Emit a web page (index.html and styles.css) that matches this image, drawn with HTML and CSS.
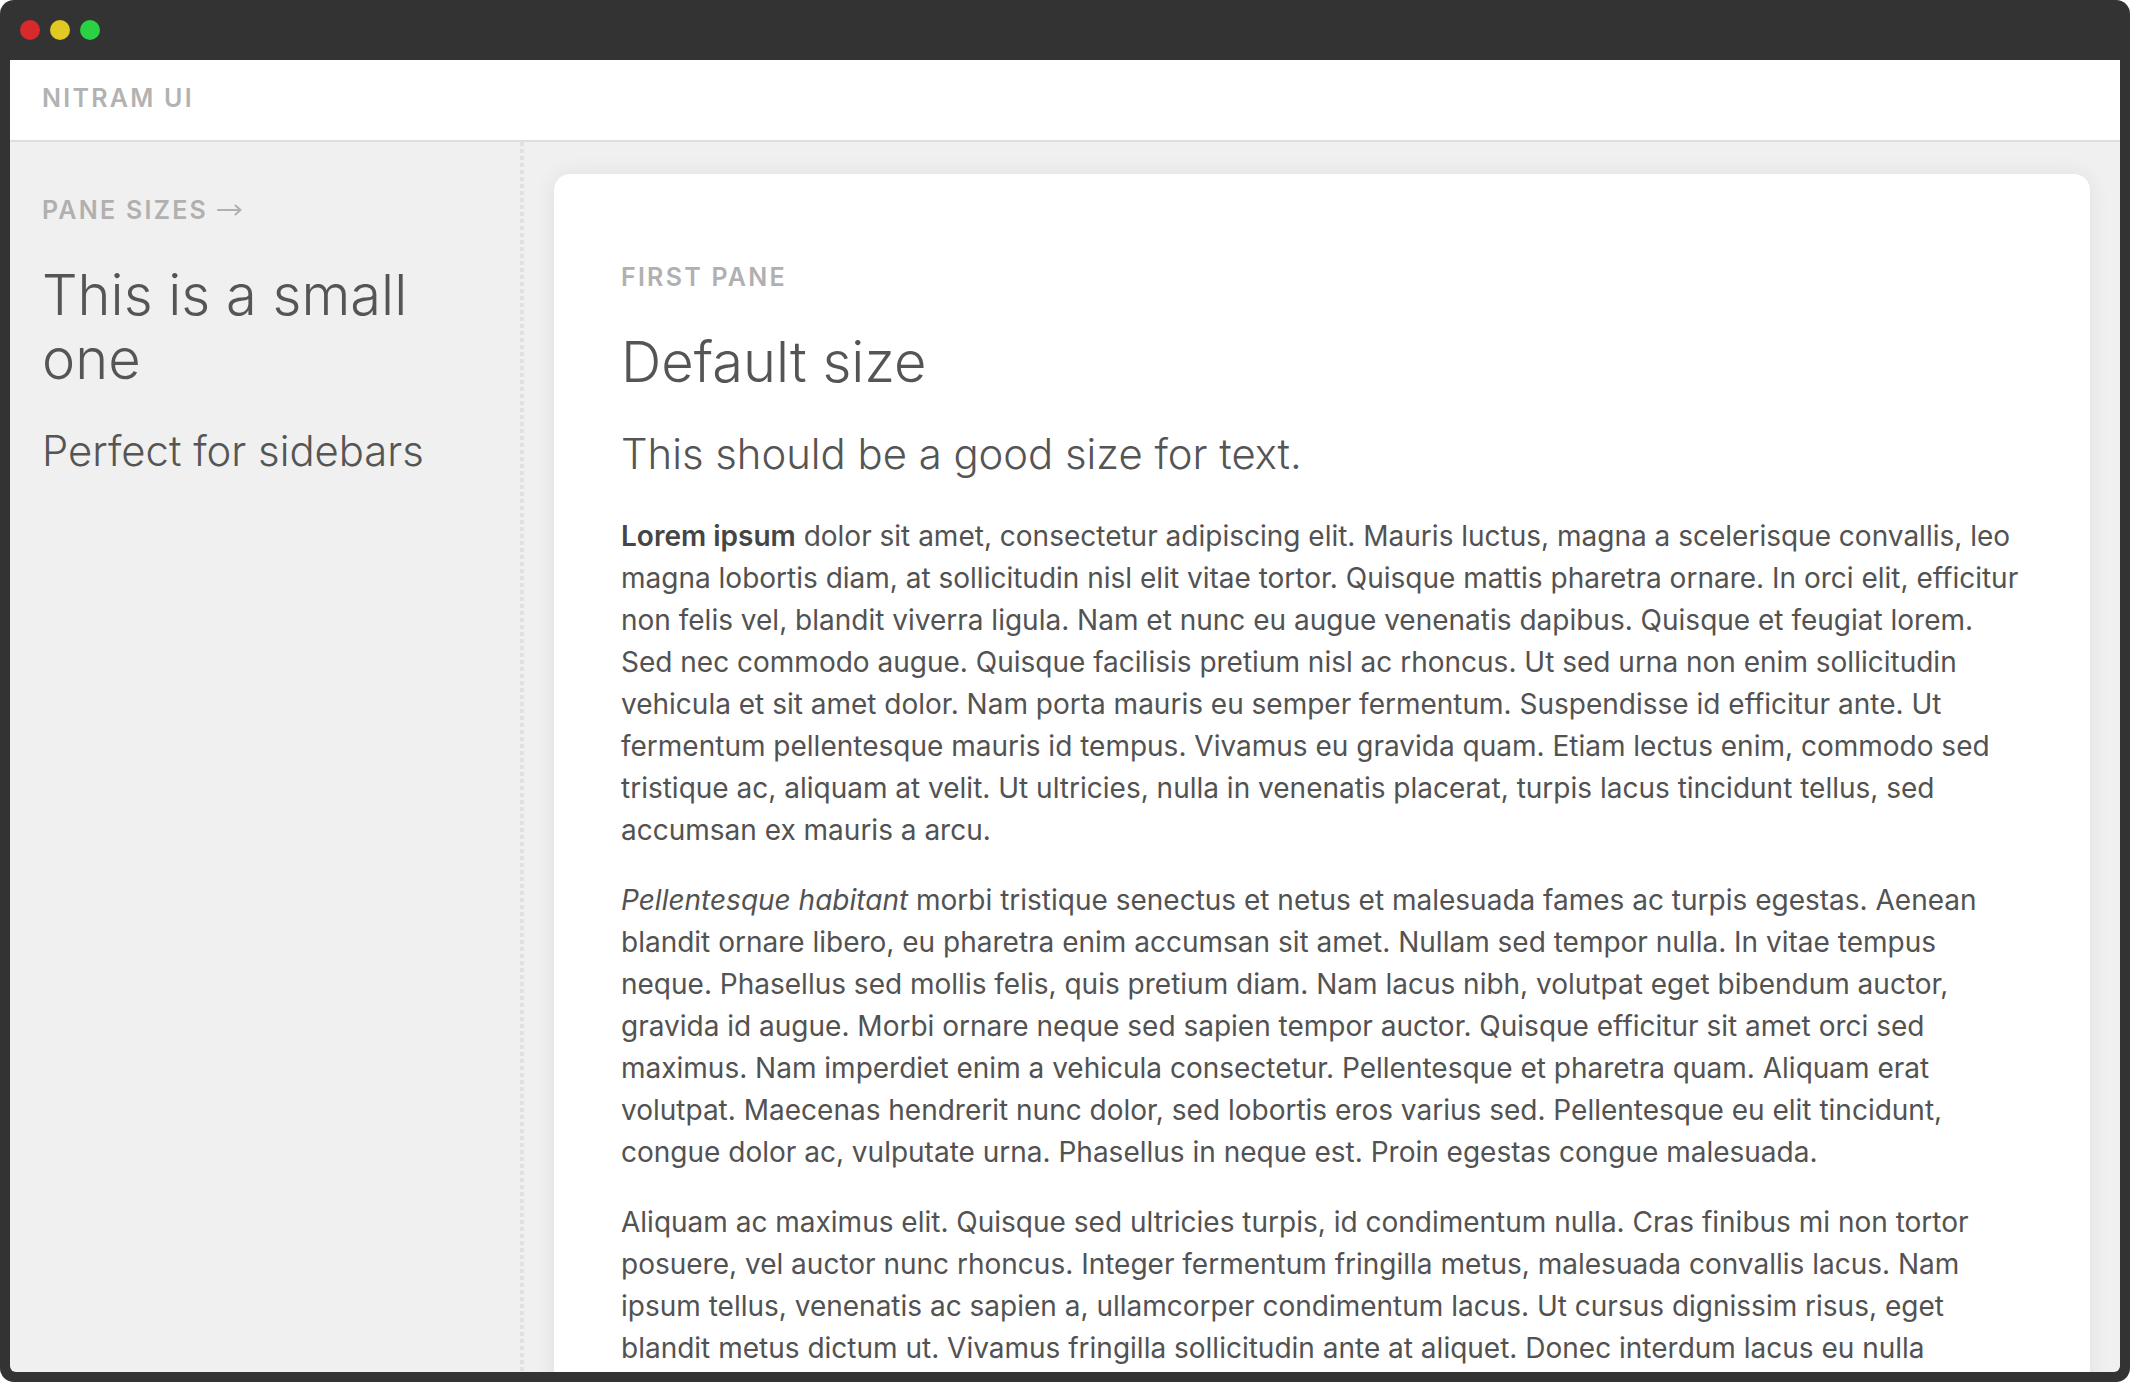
FILE: index.html
```html
<!DOCTYPE html>
<html lang="en">
<head>
<meta charset="utf-8">
<title>Nitram UI</title>
<link rel="stylesheet" href="styles.css">
</head>
<body>
<div class="window">
  <div class="titlebar">
    <span class="dot dot-red"></span>
    <span class="dot dot-yellow"></span>
    <span class="dot dot-green"></span>
  </div>
  <div class="app">
    <header class="app-header">
      <span class="brand">NITRAM UI</span>
    </header>
    <main class="panes">
      <aside class="sidebar">
        <div class="label">PANE SIZES<svg class="arrow" width="25" height="12" viewBox="0 0 25 12" aria-hidden="true"><path d="M1 6H23.5M18.5 1.5L23.5 6L18.5 10.5" fill="none" stroke="currentColor" stroke-width="2" stroke-linecap="round" stroke-linejoin="round"/></svg></div>
        <h1 class="title">This is a small one</h1>
        <p class="subtitle">Perfect for sidebars</p>
      </aside>
      <div class="divider"></div>
      <section class="pane">
        <article class="card">
          <div class="label">FIRST PANE</div>
          <h1 class="title">Default size</h1>
          <p class="subtitle">This should be a good size for text.</p>
          <p class="body"><strong>Lorem ipsum</strong> dolor sit amet, consectetur adipiscing elit. Mauris luctus, magna a scelerisque convallis, leo magna lobortis diam, at sollicitudin nisl elit vitae tortor. Quisque mattis pharetra ornare. In orci elit, efficitur non felis vel, blandit viverra ligula. Nam et nunc eu augue venenatis dapibus. Quisque et feugiat lorem. Sed nec commodo augue. Quisque facilisis pretium nisl ac rhoncus. Ut sed urna non enim sollicitudin vehicula et sit amet dolor. Nam porta mauris eu semper fermentum. Suspendisse id efficitur ante. Ut fermentum pellentesque mauris id tempus. Vivamus eu gravida quam. Etiam lectus enim, commodo sed tristique ac, aliquam at velit. Ut ultricies, nulla in venenatis placerat, turpis lacus tincidunt tellus, sed accumsan ex mauris a arcu.</p>
          <p class="body"><em>Pellentesque habitant</em> morbi tristique senectus et netus et malesuada fames ac turpis egestas. Aenean blandit ornare libero, eu pharetra enim accumsan sit amet. Nullam sed tempor nulla. In vitae tempus neque. Phasellus sed mollis felis, quis pretium diam. Nam lacus nibh, volutpat eget bibendum auctor, gravida id augue. Morbi ornare neque sed sapien tempor auctor. Quisque efficitur sit amet orci sed maximus. Nam imperdiet enim a vehicula consectetur. Pellentesque et pharetra quam. Aliquam erat volutpat. Maecenas hendrerit nunc dolor, sed lobortis eros varius sed. Pellentesque eu elit tincidunt, congue dolor ac, vulputate urna. Phasellus in neque est. Proin egestas congue malesuada.</p>
          <p class="body">Aliquam ac maximus elit. Quisque sed ultricies turpis, id condimentum nulla. Cras finibus mi non tortor posuere, vel auctor nunc rhoncus. Integer fermentum fringilla metus, malesuada convallis lacus. Nam ipsum tellus, venenatis ac sapien a, ullamcorper condimentum lacus. Ut cursus dignissim risus, eget blandit metus dictum ut. Vivamus fringilla sollicitudin ante at aliquet. Donec interdum lacus eu nulla tincidunt, vel posuere magna rhoncus. Sed vitae lorem at nisi porttitor fermentum.</p>
        </article>
      </section>
    </main>
  </div>
</div>
</body>
</html>
```

FILE: styles.css
```css
* { box-sizing: border-box; }

html, body {
  margin: 0;
  padding: 0;
  height: 100%;
  background: #ffffff;
}

body {
  font-family: Inter, "Noto Sans", "Liberation Sans", sans-serif;
  color: #555555;
}

.window {
  height: 100vh;
  background: #333333;
  border-radius: 14px;
  display: flex;
  flex-direction: column;
  overflow: hidden;
}

.titlebar {
  height: 60px;
  flex: none;
  display: flex;
  align-items: center;
  gap: 10px;
  padding-left: 20px;
}

.dot {
  width: 20px;
  height: 20px;
  border-radius: 50%;
  display: block;
}
.dot-red { background: #d92a2b; }
.dot-yellow { background: #e1c923; }
.dot-green { background: #2ad142; }

.app {
  flex: 1;
  min-height: 0;
  margin: 0 10px 10px 10px;
  background: #f0f0f0;
  border-radius: 0 0 6px 6px;
  overflow: hidden;
  display: flex;
  flex-direction: column;
}

.app-header {
  height: 82px;
  flex: none;
  background: #ffffff;
  border-bottom: 2px solid #dedede;
  display: flex;
  align-items: center;
  padding-left: 32px;
  padding-bottom: 4px;
}

.brand {
  font-size: 25px;
  font-weight: 600;
  letter-spacing: 0.09em;
  color: #b2b2b2;
}

.panes {
  flex: 1;
  min-height: 0;
  display: flex;
}

.sidebar {
  width: 510px;
  flex: none;
  padding: 49px 32px 0 32px;
}

.divider {
  width: 4px;
  flex: none;
  background: repeating-linear-gradient(to bottom, #e1e1e1 0 4px, transparent 4px 7px);
}

.pane {
  flex: 1;
  min-width: 0;
  padding: 32px 30px 0 30px;
}

.card {
  background: #ffffff;
  border-radius: 16px;
  box-shadow: 0 0 22px rgba(0, 0, 0, 0.07);
  padding: 84px 67px 40px 67px;
  min-height: 1400px;
}

.label {
  font-size: 25px;
  line-height: 38px;
  font-weight: 600;
  letter-spacing: 0.09em;
  color: #b0b0b0;
  margin: 0;
}

.arrow {
  display: inline-block;
  vertical-align: middle;
  margin-left: 9px;
  margin-top: -4px;
}

.title {
  font-size: 56px;
  line-height: 64px;
  font-weight: 260;
  color: #555555;
  margin: 34px 0 0 0;
  letter-spacing: 0;
}

.subtitle {
  font-size: 41.8px;
  line-height: 55px;
  font-weight: 270;
  color: #555555;
  margin: 33px 0 0 0;
}

.body {
  font-size: 28px;
  line-height: 42px;
  font-weight: 400;
  color: #525252;
  margin: 33px 0 0 0;
}

.body + .body {
  margin-top: 28px;
}

.body strong {
  font-weight: 600;
  color: #454545;
}
```
